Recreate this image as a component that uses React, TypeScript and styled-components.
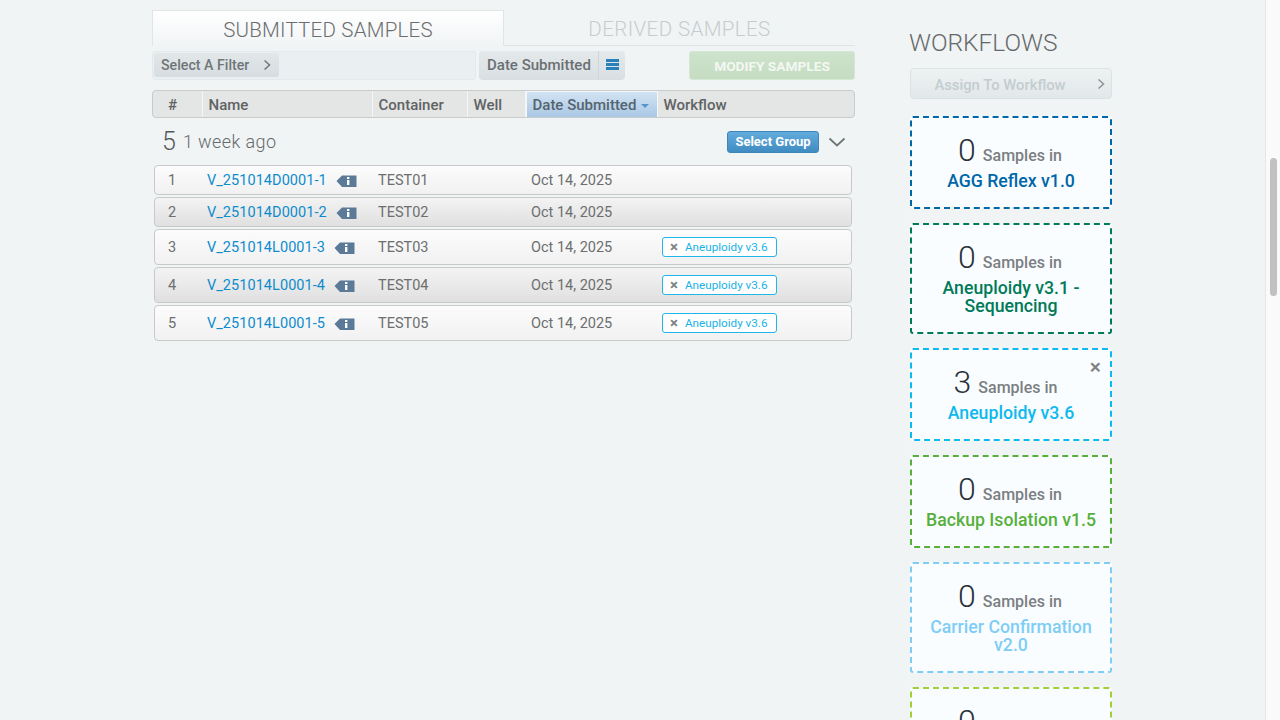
import { createGlobalStyle, styled } from "styled-components"

const font = `Roboto, "Noto Sans", sans-serif`

const GlobalStyle = createGlobalStyle`
  html, body {
    margin: 0;
    height: 100%;
    overflow: hidden;
    background: #f0f4f5;
    font-family: ${font};
  }
  * { box-sizing: border-box; }
`

const columns = "50px 170px 95px 58px 132px 1fr"
const rowColumns = "49px 170px 95px 58px 132px 1fr"

const samples = [
  { id: 1, name: "V_251014D0001-1", container: "TEST01", workflow: false, shaded: false },
  { id: 2, name: "V_251014D0001-2", container: "TEST02", workflow: false, shaded: true },
  { id: 3, name: "V_251014L0001-3", container: "TEST03", workflow: true, shaded: false },
  { id: 4, name: "V_251014L0001-4", container: "TEST04", workflow: true, shaded: true },
  { id: 5, name: "V_251014L0001-5", container: "TEST05", workflow: true, shaded: false },
]

const workflows = [
  { name: "AGG Reflex v1.0", count: 0, color: "#0067a8" },
  { name: "Aneuploidy v3.1 - Sequencing", count: 0, color: "#007a58" },
  { name: "Aneuploidy v3.6", count: 3, color: "#0db9ee", removable: true },
  { name: "Backup Isolation v1.5", count: 0, color: "#57b03c" },
  { name: "Carrier Confirmation v2.0", count: 0, color: "#7fcdf5" },
  { name: "", count: 0, color: "#a2cf37" },
]

function Chevron({ size = 12, color = "#6f7678" }: { size?: number; color?: string }) {
  return (
    <svg width={size * 0.67} height={size} viewBox="0 0 8 12" fill="none">
      <path d="M1.5 1.5 6.5 6 1.5 10.5" stroke={color} strokeWidth="1.5" />
    </svg>
  )
}

function InfoTag() {
  return (
    <svg width="21" height="12" viewBox="0 0 21 12">
      <path d="M6 0.5H20.5V12H6L0.5 6Z" fill="#5a7a97" />
      <rect x="11" y="2" width="2.4" height="2" fill="#fff" />
      <rect x="11" y="5" width="2.4" height="5" fill="#fff" />
    </svg>
  )
}

function SortIcon() {
  return (
    <svg width="13" height="11" viewBox="0 0 13 11">
      <rect y="0" width="13" height="3" fill="#2a80b8" />
      <rect y="4" width="13" height="3" fill="#2a80b8" />
      <rect y="8" width="13" height="3" fill="#2a80b8" />
    </svg>
  )
}

export default function App() {
  return (
    <>
      <GlobalStyle />
      <Page>
        <Content>
          <Samples>
            <Tabs>
              <Tab $active>SUBMITTED SAMPLES</Tab>
              <Tab>DERIVED SAMPLES</Tab>
            </Tabs>
            <Toolbar>
              <FilterWell>
                <FilterButton>
                  Select A Filter
                  <Chevron />
                </FilterButton>
              </FilterWell>
              <SortControl>
                <SortLabel>Date Submitted</SortLabel>
                <SortToggle>
                  <SortIcon />
                </SortToggle>
              </SortControl>
              <ModifyButton>MODIFY SAMPLES</ModifyButton>
            </Toolbar>
            <TableHead>
              <HeadCell $center>#</HeadCell>
              <HeadCell>Name</HeadCell>
              <HeadCell>Container</HeadCell>
              <HeadCell>Well</HeadCell>
              <HeadCell $sorted>
                Date Submitted
                <SortCaret />
              </HeadCell>
              <HeadCell $last>Workflow</HeadCell>
            </TableHead>
            <GroupRow>
              <GroupCount>5</GroupCount>
              <GroupAge>1 week ago</GroupAge>
              <SelectGroup>Select Group</SelectGroup>
              <svg width="18" height="10" viewBox="0 0 18 10" fill="none">
                <path d="M1.5 1.5 9 8.5 16.5 1.5" stroke="#6f7678" strokeWidth="1.8" />
              </svg>
            </GroupRow>
            <Rows>
              {samples.map((s) => (
                <Row key={s.id} $shaded={s.shaded} $tall={s.workflow}>
                  <Cell>{s.id}</Cell>
                  <NameCell>
                    <SampleLink>{s.name}</SampleLink>
                    <InfoTag />
                  </NameCell>
                  <Cell>{s.container}</Cell>
                  <Cell />
                  <Cell>Oct 14, 2025</Cell>
                  <Cell>
                    {s.workflow && (
                      <WorkflowBadge>
                        <BadgeClose>×</BadgeClose>
                        Aneuploidy v3.6
                      </WorkflowBadge>
                    )}
                  </Cell>
                </Row>
              ))}
            </Rows>
          </Samples>
          <Sidebar>
            <SidebarTitle>WORKFLOWS</SidebarTitle>
            <AssignButton>
              Assign To Workflow
              <AssignChevron>
                <Chevron color="#8b9698" />
              </AssignChevron>
            </AssignButton>
            <Cards>
              {workflows.map((w) => (
                <Card key={w.color} $color={w.color}>
                  {w.removable && <CardClose>×</CardClose>}
                  <CardCount $removable={w.removable}>
                    <CountNumber>{w.count}</CountNumber>
                    <CountLabel>Samples in</CountLabel>
                  </CardCount>
                  <CardName $color={w.color}>{w.name}</CardName>
                </Card>
              ))}
            </Cards>
          </Sidebar>
        </Content>
        <ScrollTrack>
          <ScrollThumb />
        </ScrollTrack>
      </Page>
    </>
  )
}

const Page = styled.div`
  display: flex;
  height: 720px;
  overflow: hidden;
`

const Content = styled.div`
  flex: 1;
  display: flex;
  align-items: flex-start;
  gap: 55px;
  padding: 10px 0 0 152px;
  height: 720px;
  overflow: hidden;
`

const ScrollTrack = styled.div`
  width: 15px;
  flex: none;
  padding: 158px 3px 0 4px;
  background: #fafafa;
  border-left: 1px solid #e6e6e6;
`

const ScrollThumb = styled.div`
  height: 138px;
  border-radius: 4px;
  background: #c1c1c1;
`

const Samples = styled.div`
  width: 703px;
  flex: none;
`

const Tabs = styled.div`
  display: grid;
  grid-template-columns: 352px 351px;
  height: 36px;
`

const Tab = styled.div<{ $active?: boolean }>`
  display: flex;
  align-items: center;
  justify-content: center;
  padding-top: 2px;
  font-size: 20.5px;
  font-weight: 300;
  letter-spacing: ${(p) => (p.$active ? "0.22px" : "0.4px")};
  color: ${(p) => (p.$active ? "#6b6e6f" : "#c9cccd")};
  ${(p) =>
    p.$active
      ? `
    background: linear-gradient(#ffffff, #f1f4f5);
    border: 1px solid #e2e5e6;
    border-bottom: none;
  `
      : `
    border-bottom: 1px solid #dfe3e4;
  `}
`

const Toolbar = styled.div`
  display: flex;
  margin-top: 5px;
  height: 29px;
`

const FilterWell = styled.div`
  width: 324px;
  padding: 1px;
  background: #eaeff1;
  border: 1px solid #e4e9eb;
  border-radius: 3px;
`

const FilterButton = styled.div`
  width: 125px;
  height: 24px;
  display: flex;
  align-items: center;
  justify-content: space-between;
  padding: 0 8px 0 7px;
  border-radius: 3px;
  background: linear-gradient(#e2e7e9, #d6dde0);
  font-size: 14.2px;
  font-weight: 500;
  color: #6f7678;
`

const SortControl = styled.div`
  width: 146px;
  margin-left: 3px;
  display: flex;
  border-radius: 4px;
  background: linear-gradient(#e4e9eb, #d8dfe2);
`

const SortLabel = styled.div`
  width: 120px;
  display: flex;
  align-items: center;
  padding: 0 0 2px 8px;
  font-size: 15px;
  font-weight: 500;
  white-space: nowrap;
  color: #6b7072;
  border-right: 1px solid #cfd6d9;
`

const SortToggle = styled.div`
  flex: 1;
  display: flex;
  align-items: center;
  justify-content: center;
  padding-bottom: 3px;
`

const ModifyButton = styled.div`
  width: 166px;
  margin-left: auto;
  display: flex;
  align-items: center;
  justify-content: center;
  border-radius: 3px;
  background: linear-gradient(#cde3cb, #c5dcc3);
  border: 1px solid #d6e6d4;
  font-size: 13.7px;
  font-weight: 700;
  color: #f3f8f2;
`

const TableHead = styled.div`
  display: grid;
  grid-template-columns: ${columns};
  height: 28px;
  margin-top: 10px;
  background: #e4e5e5;
  border: 1px solid #c9cbcb;
  border-radius: 4px;
  overflow: hidden;
`

const HeadCell = styled.div<{ $center?: boolean; $sorted?: boolean; $last?: boolean }>`
  display: flex;
  align-items: center;
  justify-content: ${(p) => (p.$center ? "center" : "flex-start")};
  padding: ${(p) => (p.$center ? "1px 10px 0 0" : "1px 0 0 5.5px")};
  font-size: 15px;
  font-weight: 500;
  color: #5f6364;
  border-right: ${(p) => (p.$last ? "none" : "1px solid #f4f5f5")};
  ${(p) =>
    p.$sorted &&
    `
    background: linear-gradient(#d2e3f3, #a9c8e4);
    border-top: 1px solid #f4f7fa;
    border-left: 1px solid #f4f7fa;
    border-right: 1px solid #f4f7fa;
    color: #55646f;
  `}
`

const SortCaret = styled.span`
  margin-left: 5px;
  margin-top: 1px;
  border-left: 4px solid transparent;
  border-right: 4px solid transparent;
  border-top: 4px solid #5c93cb;
`

const GroupRow = styled.div`
  display: flex;
  align-items: center;
  height: 47px;
  padding: 0 9px 0 10px;
`

const GroupCount = styled.span`
  font-size: 25px;
  font-weight: 300;
  color: #55585a;
`

const GroupAge = styled.span`
  margin-left: 7px;
  font-size: 18px;
  font-weight: 300;
  letter-spacing: 0.4px;
  color: #66696b;
`

const SelectGroup = styled.div`
  margin-left: auto;
  margin-right: 9px;
  width: 92px;
  height: 22px;
  display: flex;
  align-items: center;
  justify-content: center;
  border-radius: 3px;
  background: linear-gradient(#63abdc, #3f8cc2);
  border: 1px solid #3f86b8;
  font-size: 13px;
  font-weight: 700;
  color: #fff;
`

const Rows = styled.div`
  display: flex;
  flex-direction: column;
  gap: 2px;
  margin: 0 3px 0 2px;
`

const Row = styled.div<{ $shaded: boolean; $tall: boolean }>`
  display: grid;
  grid-template-columns: ${rowColumns};
  align-items: center;
  height: ${(p) => (p.$tall ? "36px" : "30px")};
  border: 1px solid #c8caca;
  border-radius: 4px;
  background: ${(p) =>
    p.$shaded
      ? "linear-gradient(#f3f3f3, #e0e0e0)"
      : "linear-gradient(#fcfcfc, #f1f1f1)"};
  font-size: 14.5px;
  color: #6c6e6f;
`

const Cell = styled.div`
  padding-left: 4px;
  &:first-child {
    padding-left: 13px;
  }
`

const NameCell = styled.div`
  display: flex;
  align-items: center;
  gap: 9px;
  padding-left: 3px;
  svg {
    margin-top: 2px;
  }
`

const SampleLink = styled.span`
  color: #0e8ccd;
  letter-spacing: 0.05px;
  white-space: nowrap;
`

const WorkflowBadge = styled.div`
  width: 115px;
  height: 20px;
  margin-left: -1px;
  display: flex;
  align-items: center;
  padding-left: 7px;
  border: 1px solid #1fb6e8;
  border-radius: 3px;
  background: #fff;
  font-size: 11.7px;
  color: #18b2e6;
`

const BadgeClose = styled.span`
  margin-right: 7px;
  font-size: 15px;
  line-height: 1;
  font-weight: 700;
  color: #7d8283;
`

const Sidebar = styled.div`
  width: 202px;
  flex: none;
  margin-top: 20px;
`

const SidebarTitle = styled.div`
  margin-left: -1px;
  font-size: 24.5px;
  line-height: 26px;
  font-weight: 300;
  color: #66696b;
`

const AssignButton = styled.div`
  position: relative;
  height: 31px;
  margin-top: 12px;
  display: flex;
  align-items: center;
  justify-content: center;
  padding: 3px 22px 0 0;
  border: 1px solid #dbe2e4;
  border-radius: 4px;
  background: linear-gradient(#eef2f3, #e2e7e9);
  font-size: 14.8px;
  font-weight: 500;
  color: #c3cdd0;
`

const AssignChevron = styled.span`
  position: absolute;
  right: 6px;
  top: 9px;
  display: flex;
`

const Cards = styled.div`
  display: flex;
  flex-direction: column;
  gap: 14px;
  margin-top: 17px;
`

const Card = styled.div<{ $color: string }>`
  position: relative;
  padding: 16px 6px 17px;
  border: 2px dashed ${(p) => p.$color};
  border-radius: 3px;
  background: #f9fdff;
  text-align: center;
`

const CardClose = styled.span`
  position: absolute;
  right: 9px;
  top: 7px;
  font-size: 21px;
  line-height: 1;
  font-weight: 500;
  color: #7d8283;
`

const CardCount = styled.div<{ $removable?: boolean }>`
  display: flex;
  align-items: baseline;
  justify-content: center;
  height: 32px;
  padding-right: ${(p) => (p.$removable ? "11px" : "2px")};
`

const CountNumber = styled.span`
  font-size: 32px;
  line-height: 32px;
  font-weight: 300;
  color: #2a3138;
`

const CountLabel = styled.span`
  margin-left: 7px;
  font-size: 16px;
  font-weight: 500;
  color: #7b7f82;
`

const CardName = styled.div<{ $color: string }>`
  margin-top: 6px;
  font-size: 17.7px;
  line-height: 18px;
  font-weight: 500;
  color: ${(p) => p.$color};
`
